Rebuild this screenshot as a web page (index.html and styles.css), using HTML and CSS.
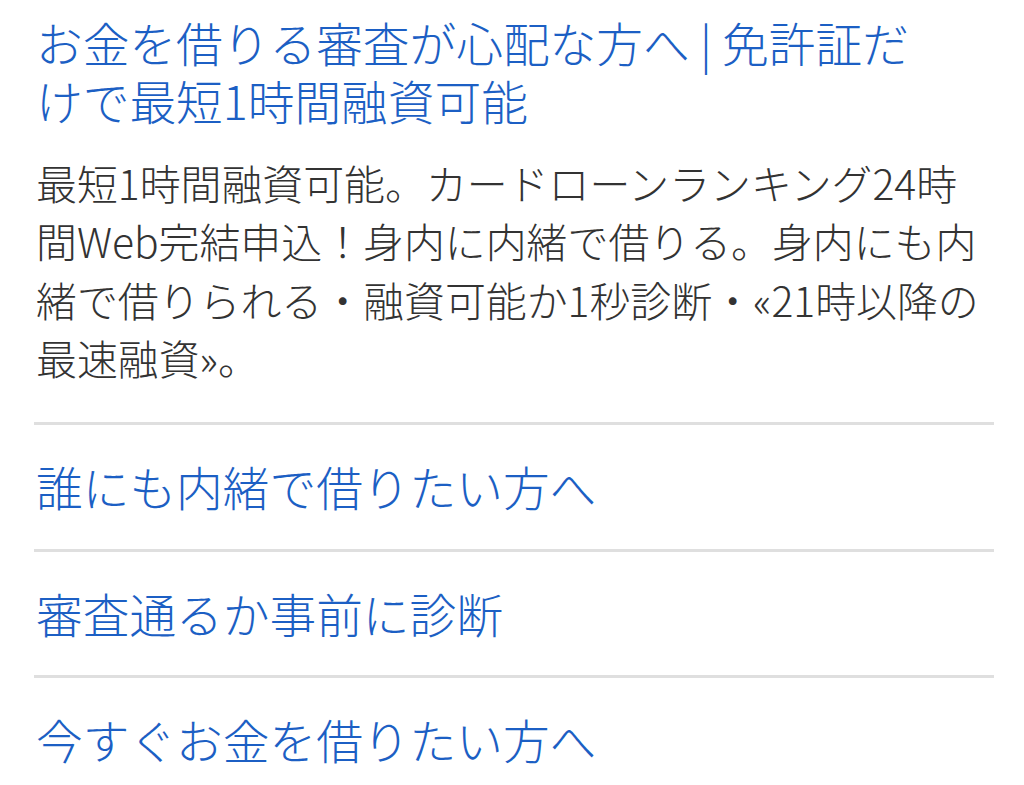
FILE: index.html
```html
<!DOCTYPE html>
<html lang="ja">
<head>
<meta charset="utf-8">
<link rel="stylesheet" href="styles.css">
</head>
<body>
<div class="ad">
  <div class="head">
    <a class="title" href="#">お金を借りる審査が心配な方へ | 免許証だ<br>けで最短1時間融資可能</a>
    <p class="desc">最短1時間融資可能。カードローンランキング24時<br>間Web完結申込！身内に内緒で借りる。身内にも内<br>緒で借りられる・融資可能か1秒診断・«21時以降の<br>最速融資»。</p>
  </div>
  <ul class="links">
    <li class="link-row"><a href="#">誰にも内緒で借りたい方へ</a></li>
    <li class="link-row"><a href="#">審査通るか事前に診断</a></li>
    <li class="link-row"><a href="#">今すぐお金を借りたい方へ</a></li>
  </ul>
</div>
</body>
</html>
```
FILE: styles.css
```css
html, body {
  margin: 0;
  padding: 0;
  background: #ffffff;
}
body {
  font-family: "Noto Sans CJK JP", "Noto Sans", sans-serif;
  width: 1024px;
  height: 785px;
  overflow: hidden;
}
.ad {
  padding: 13px 30px 0 34px;
}
.head {
  padding: 0 2px 35px 2px;
}
.title {
  display: block;
  color: #1c5fc4;
  text-decoration: none;
  font-size: 46.7px;
  line-height: 58.4px;
  font-weight: 300;
  white-space: nowrap;
}
.desc {
  margin: 24px 0 0 0;
  color: #333333;
  font-size: 40.9px;
  line-height: 58.4px;
  font-weight: 300;
  white-space: nowrap;
}
.links {
  list-style: none;
  margin: 0;
  padding: 0;
}
.link-row {
  border-top: 3px solid #dfdfdf;
  padding: 32px 2px 33px 2px;
}
.link-row a {
  display: block;
  color: #1c5fc4;
  text-decoration: none;
  font-size: 46.7px;
  line-height: 58.4px;
  font-weight: 300;
  white-space: nowrap;
}
```
